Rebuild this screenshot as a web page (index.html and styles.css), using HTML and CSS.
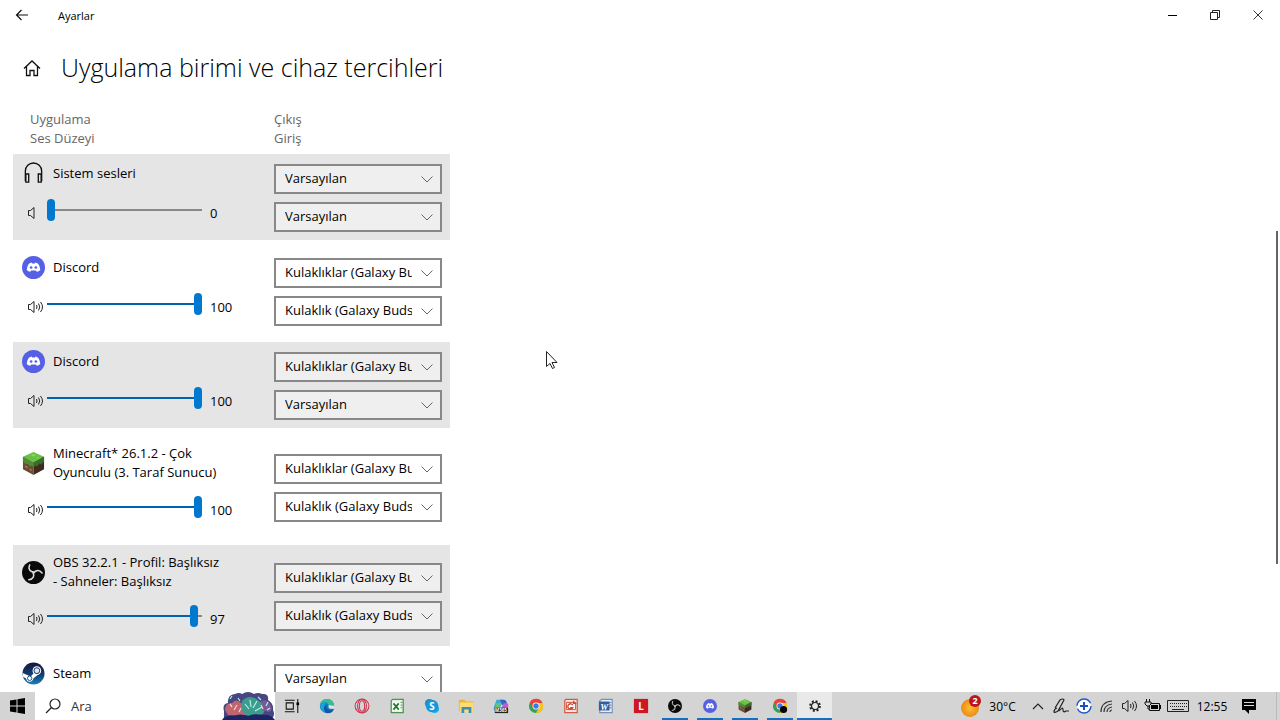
FILE: index.html
```html
<!DOCTYPE html>
<html lang="tr">
<head>
    <meta charset="UTF-8">
    <meta name="viewport" content="width=device-width, initial-scale=1.0">
    <title>Ayarlar</title>
    <link rel="stylesheet" href="styles.css">
</head>
<body>
    <svg class="sprite" aria-hidden="true">
        <symbol id="down" viewBox="0 0 12 12"><path d="M.5 3.5 6 9l5.500-5.500" fill="none" stroke="#666"/></symbol>
        <symbol id="mute" viewBox="0 0 18 16"><path d="M1.500 5.500h2L7 2.500v11L3.500 10.500h-2z" fill="none" stroke="#222"/></symbol>
        <symbol id="sound" viewBox="0 0 18 16"><path d="M1.500 5.500h2L7 2.500v11L3.500 10.500h-2zM9.500 6q1 2 0 4M11.500 4.500q2.500 3.500 0 7M13.500 3q4 5 0 10" fill="none" stroke="#222"/></symbol>
        <symbol id="discord" viewBox="0 0 24 24"><circle cx="12" cy="12" r="12" fill="#5560e4"/><path d="M8.500 7.200 10 6.800l.5.900h3l.5-.9 1.500.4q2.800 1.200 3.600 7.300-1.600 1.700-3.700 2l-.9-1.400H9.500l-.9 1.400q-2.100-.3-3.700-2 .8-6.100 3.600-7.300z" fill="#fff"/><circle cx="9.500" cy="12" r="1.400" fill="#5560e4"/><circle cx="14.500" cy="12" r="1.400" fill="#5560e4"/></symbol>
        <symbol id="block" viewBox="0 0 24 24"><path d="M12 0 23 5 12 11 1 5z" fill="#69c043"/><path d="M1 5l11 6v13L1 18z" fill="#6b4a35"/><path d="M23 5l-11 6v13l11-6z" fill="#402a20"/><path d="M1 5l11 6v5l-2-2-2 1-2-3-2 1-3-3z" fill="#4f8d32"/><path d="M23 5l-11 6v5l2-2 2 1 2-3 2 1 3-3z" fill="#386f28"/><path d="M3 14l3 1v2l-3-1zM8 17l2 1v2l-2-1z" fill="#a17857"/><path d="M12 2l3 1-3 2-3-2zM16 5l2 1-3 1z" fill="#83da58"/></symbol>
        <symbol id="obs" viewBox="0 0 24 24">
            <circle cx="12" cy="12" r="12" fill="#090909"/>
            <g fill="none" stroke="#ddd" stroke-width="1.600" stroke-linecap="round">
                <path d="M12.500 11.500C8.500 11.500 6 8.500 8 4"/>
                <path d="M12.500 11.500C8.500 11.500 6 8.500 8 4" transform="rotate(120 12 12)"/>
                <path d="M12.500 11.500C8.500 11.500 6 8.500 8 4" transform="rotate(240 12 12)"/>
            </g>
        </symbol>
        <symbol id="steam" viewBox="0 0 24 24"><defs><linearGradient id="steamBlue" x1="0" y1="0" x2="0" y2="1"><stop offset="0" stop-color="#14183d"/><stop offset=".55" stop-color="#143d70"/><stop offset="1" stop-color="#1683bb"/></linearGradient></defs><circle cx="12" cy="12" r="11.500" fill="url(#steamBlue)"/><path d="M.6 11.500 9 15l5-5 3 3-5 4q-1 4-4.500 3.500-3-.5-3.500-3.500L.8 15.500z" fill="#fff"/><circle cx="15.500" cy="9" r="4.500" fill="#fff"/><circle cx="15.500" cy="9" r="3" fill="#183a68" stroke="#183a68"/><circle cx="15.500" cy="9" r="2.500" fill="#dce9f4"/><circle cx="8" cy="17" r="2.300" fill="none" stroke="#17558a"/></symbol>
        <symbol id="headphones" viewBox="0 0 24 24"><path d="M3.500 20V9.500a8.500 8.500 0 0 1 17 0V20M4 12.500h3V21H4zM17 12.500h3V21h-3z" fill="none" stroke="#111" stroke-width="1.400"/></symbol>
        <symbol id="chrome" viewBox="0 0 18 18"><circle cx="9" cy="9" r="8" fill="#32a554"/><path d="M2 5a8 8 0 0 1 14.200.5H9L5.600 11z" fill="#e94335"/><path d="M9 5.500h7.200A8 8 0 0 1 8.800 17l3.500-6z" fill="#fbc21b"/><circle cx="9" cy="9" r="3.900" fill="#fff"/><circle cx="9" cy="9" r="3" fill="#3979e8"/></symbol>
    </svg>

    <header class="titlebar">
        <button class="back" aria-label="Geri"><svg width="14" height="12" viewBox="0 0 14 12"><path d="M6.500 1 1.500 6l5 5M1.500 6H13" fill="none" stroke="#111" stroke-width="1.200"/></svg></button>
        <span class="window-name">Ayarlar</span>
        <button class="window-button" aria-label="Simge durumuna küçült"><svg width="12" height="12"><path d="M1 6.500h9" stroke="#000"/></svg></button>
        <button class="window-button" aria-label="Önceki boyut"><svg width="12" height="12"><path d="M.5 3.500h7v7h-7zM2.500 3.500v-2h7v7h-2" fill="none" stroke="#222"/></svg></button>
        <button class="window-button" aria-label="Kapat"><svg width="12" height="12"><path d="m.5 1.500 9 9m0-9-9 9" stroke="#333"/></svg></button>
    </header>

    <main class="content">
        <div class="heading">
            <a href="#" class="home" aria-label="Giriş sayfası"><svg width="18" height="18"><path d="M1 9.500 9 2l8 7.500M3.500 7.500v9h3.500v-5h4v5h3.500v-9" fill="none" stroke="#111" stroke-width="1.300"/></svg></a>
            <h1>Uygulama birimi ve cihaz tercihleri</h1>
        </div>
        <div class="mixer">
            <div class="labels">
                <p>Uygulama<br>Ses Düzeyi</p>
                <p>Çıkış<br>Giriş</p>
            </div>

            <section class="app">
                <div class="source">
                    <div class="name"><svg class="logo"><use href="#headphones"/></svg><h2>Sistem sesleri</h2></div>
                    <div class="volume">
                        <svg class="speaker"><use href="#mute"/></svg>
                        <input type="range" aria-label="Sistem sesleri ses düzeyi" value="0" style="--level: 0%">
                        <output>0</output>
                    </div>
                </div>
                <div class="devices">
                    <div class="device"><select aria-label="Sistem sesleri çıkış"><option>Varsayılan</option></select><svg><use href="#down"/></svg></div>
                    <div class="device"><select aria-label="Sistem sesleri giriş"><option>Varsayılan</option></select><svg><use href="#down"/></svg></div>
                </div>
            </section>

            <section class="app">
                <div class="source">
                    <div class="name"><svg class="logo"><use href="#discord"/></svg><h2>Discord</h2></div>
                    <div class="volume">
                        <svg class="speaker"><use href="#sound"/></svg>
                        <input type="range" aria-label="Discord ses düzeyi" value="100" style="--level: 100%">
                        <output>100</output>
                    </div>
                </div>
                <div class="devices">
                    <div class="device"><select aria-label="Discord çıkış"><option>Kulaklıklar (Galaxy Buds)</option></select><svg><use href="#down"/></svg></div>
                    <div class="device"><select aria-label="Discord giriş"><option>Kulaklık (Galaxy Buds)</option></select><svg><use href="#down"/></svg></div>
                </div>
            </section>

            <section class="app">
                <div class="source">
                    <div class="name"><svg class="logo"><use href="#discord"/></svg><h2>Discord</h2></div>
                    <div class="volume">
                        <svg class="speaker"><use href="#sound"/></svg>
                        <input type="range" aria-label="Discord ses düzeyi" value="100" style="--level: 100%">
                        <output>100</output>
                    </div>
                </div>
                <div class="devices">
                    <div class="device"><select aria-label="Discord çıkış"><option>Kulaklıklar (Galaxy Buds)</option></select><svg><use href="#down"/></svg></div>
                    <div class="device"><select aria-label="Discord giriş"><option>Varsayılan</option></select><svg><use href="#down"/></svg></div>
                </div>
            </section>

            <section class="app">
                <div class="source">
                    <div class="name"><svg class="logo"><use href="#block"/></svg><h2>Minecraft* 26.1.2 - Çok Oyunculu (3. Taraf Sunucu)</h2></div>
                    <div class="volume">
                        <svg class="speaker"><use href="#sound"/></svg>
                        <input type="range" aria-label="Minecraft ses düzeyi" value="100" style="--level: 100%">
                        <output>100</output>
                    </div>
                </div>
                <div class="devices">
                    <div class="device"><select aria-label="Minecraft çıkış"><option>Kulaklıklar (Galaxy Buds)</option></select><svg><use href="#down"/></svg></div>
                    <div class="device"><select aria-label="Minecraft giriş"><option>Kulaklık (Galaxy Buds)</option></select><svg><use href="#down"/></svg></div>
                </div>
            </section>

            <section class="app">
                <div class="source">
                    <div class="name"><svg class="logo"><use href="#obs"/></svg><h2>OBS 32.2.1 - Profil: Başlıksız - Sahneler: Başlıksız</h2></div>
                    <div class="volume">
                        <svg class="speaker"><use href="#sound"/></svg>
                        <input type="range" aria-label="OBS ses düzeyi" value="97" style="--level: 97%">
                        <output>97</output>
                    </div>
                </div>
                <div class="devices">
                    <div class="device"><select aria-label="OBS çıkış"><option>Kulaklıklar (Galaxy Buds)</option></select><svg><use href="#down"/></svg></div>
                    <div class="device"><select aria-label="OBS giriş"><option>Kulaklık (Galaxy Buds)</option></select><svg><use href="#down"/></svg></div>
                </div>
            </section>

            <section class="app">
                <div class="source">
                    <div class="name"><svg class="logo"><use href="#steam"/></svg><h2>Steam</h2></div>
                    <div class="volume">
                        <svg class="speaker"><use href="#sound"/></svg>
                        <input type="range" aria-label="Steam ses düzeyi" value="100" style="--level: 100%">
                        <output>100</output>
                    </div>
                </div>
                <div class="devices">
                    <div class="device"><select aria-label="Steam çıkış"><option>Varsayılan</option></select><svg><use href="#down"/></svg></div>
                    <div class="device"><select aria-label="Steam giriş"><option>Varsayılan</option></select><svg><use href="#down"/></svg></div>
                </div>
            </section>
        </div>
        <div class="scrollbar"></div>
    </main>

    <footer class="taskbar">
        <button class="start" aria-label="Başlat"><svg width="16" height="16"><path d="M0 2.500 6.500 1.500v6H0zM7.500 1.300 15 0v7.500H7.500zM0 8.500h6.500v6L0 13.500zM7.500 8.500H15V16l-7.500-1.200z" fill="#000"/></svg></button>
        <div class="search">
            <svg width="16" height="16"><circle cx="10" cy="6" r="5" fill="none" stroke="#222" stroke-width="1.200"/><path d="M6.500 9.500 1 15" stroke="#222" stroke-width="1.300"/></svg>
            <input type="text" placeholder="Ara" aria-label="Ara">
            <svg class="coral" width="53" height="28" viewBox="0 0 53 28">
                <path d="M2 19q-2-7 4-8-1-8 7-9 4-2 7 0 6-4 12 0 4-2 8 0 7-1 6 6 6 4 5 10 3 6-2 9H2z" fill="#454781"/>
                <path d="M3 18q0-7 7-7 4-5 9 0 5 3 7 12H6z" fill="#bd6571"/>
                <path d="M20 9q8-8 17 0 9 5 4 13l-15 2Q17 20 20 9z" fill="#3d9c90"/>
                <path d="M39 9q7-3 10 5 2 4-2 6l-7-2z" fill="#775a9c"/>
                <path d="M0 28q3-5 12-4 6-3 14 0 5-3 13-1 10-1 14 5z" fill="#1b2464"/>
                <path d="m27 17-4-5m6 3-1-7m3 8 4-7m-2 10 7-4M16 6l2 3M8 7l2-3m26 1 3 3m5 6 2-4m-1 8 3-2" fill="none" stroke="#b5f0df" stroke-width="1.200"/>
                <path d="m12 18 3-5m-5 2-2-3m9 8 2-4m22 1-2-4" fill="none" stroke="#ffc4bb" stroke-width="1.400"/>
            </svg>
        </div>
        <nav class="apps">
            <button aria-label="Görev görünümü"><svg viewBox="0 0 18 18"><path d="M2.500 5.500h8v7h-8zM1 2.500h11M1 15.500h11M15.500 1v16" fill="none" stroke="#111" stroke-width="1.200"/><path d="M14 5h3v3h-3z"/></svg></button>
            <button aria-label="Edge"><svg viewBox="0 0 18 18"><circle cx="9" cy="9" r="8" fill="#1675c9"/><path d="M1 8C2-1 16-1 17 8q0 4-4 4-4 0-2-3-1-5-6-4-3 1-4 3z" fill="#36bd91"/><path d="M1 8q4-5 8-2-4 1-3 5 1 4 7 4-10 5-12-7z" fill="#19a2d4"/><path d="M8 8q-1 4 4 6 3 0 5-2-2 6-9 5-5-5 0-9z" fill="#1556a4"/><path d="M11 8q-1 3 1 4h5V9z" fill="#d9e7ea"/></svg></button>
            <button aria-label="Opera"><svg viewBox="0 0 18 18"><g fill="none" stroke="#cf3551" stroke-width="1.200"><circle cx="9" cy="9" r="7.800"/><ellipse cx="9" cy="9" rx="3" ry="6"/><ellipse cx="9" cy="9" rx="5" ry="7.500"/></g></svg></button>
            <button aria-label="Excel"><svg viewBox="0 0 18 18"><path d="M4 1.500h12v15H2.500V3z" fill="#e5f2e4" stroke="#4d9450" stroke-width="1.400"/><path d="M4 5h9v9H4z" fill="#fff"/><path d="m5 6 6 7m0-7-6 7" stroke="#267535" stroke-width="2"/><path d="M13 5h2m-2 3h2m-2 3h2" stroke="#4d9450"/></svg></button>
            <button aria-label="Skype"><svg viewBox="0 0 18 18"><circle cx="6" cy="6" r="5" fill="#2488ce"/><circle cx="12" cy="12" r="5" fill="#1cabe3"/><circle cx="9" cy="9" r="7" fill="#1598d9"/><text x="9" y="13" text-anchor="middle" class="mark">S</text></svg></button>
            <button aria-label="Dosya Gezgini"><svg viewBox="0 0 18 18"><path d="M1 2h6l2 2h8v11H1z" fill="#e8b63b"/><path d="M2 5h15v11H2z" fill="#ffdb72"/><path d="M4 10h11v7h-3v-4H7v4H4z" fill="#388fbc"/></svg></button>
            <button aria-label="Copilot"><svg viewBox="0 0 18 18"><path d="M4 2h7l-4 12H2Q0 13 1 10z" fill="#3ba8da"/><path d="M8 2h4q3 0 4 5l-6 1z" fill="#3862bf"/><path d="M12 6h3q3 0 2 4l-2 4H8z" fill="#c35dc9"/><path d="m4 6 5-1-2 7H2z" fill="#61c777"/><path d="M2 11h15v6H2z" fill="#222"/><text x="9" y="16" text-anchor="middle" class="tiny">M365</text></svg></button>
            <button aria-label="Chrome"><svg><use href="#chrome"/></svg></button>
            <button aria-label="PowerPoint"><svg viewBox="0 0 18 18"><path d="M3 1.500h13v15H2V3z" fill="#f7e4df" stroke="#d45a43" stroke-width="1.400"/><path d="M4 5h10v8H4z" fill="#fff" stroke="#ce4632"/><path d="M11 8a3 3 0 1 0 0 3H8M12 3v3h3" fill="none" stroke="#ce4632" stroke-width="1.500"/></svg></button>
            <button aria-label="Word"><svg viewBox="0 0 18 18"><path d="M4 1.500h12v15H2V3z" fill="#e7edf8" stroke="#7a90b8" stroke-width="1.300"/><path d="M1 4h12v10H1z" fill="#335e9e"/><text x="7" y="13" text-anchor="middle" class="word">W</text><path d="M13 5h2m-2 3h2m-2 3h2" stroke="#456ba6"/></svg></button>
            <button aria-label="L"><svg viewBox="0 0 18 18"><path d="M1 1h16v16H1z" fill="#cd1722"/><text x="9" y="13" text-anchor="middle" class="mark">L</text></svg></button>
            <button class="running" aria-label="OBS"><svg class="small"><use href="#obs"/></svg></button>
            <button class="running" aria-label="Discord"><svg class="small"><use href="#discord"/></svg></button>
            <button class="running" aria-label="Minecraft"><svg class="small"><use href="#block"/></svg></button>
            <button class="running" aria-label="Chrome penceresi"><svg viewBox="0 0 18 18"><use href="#chrome" width="18" height="18"/><circle cx="13" cy="13" r="4" fill="#050505"/></svg></button>
            <button class="running active" aria-label="Ayarlar"><svg class="small" viewBox="0 0 18 18"><circle cx="9" cy="9" r="6" fill="none" stroke="#222" stroke-width="3" stroke-dasharray="2.500 2.212"/><circle cx="9" cy="9" r="4.500" fill="#e9e9e9" stroke="#222" stroke-width="1.500"/></svg></button>
        </nav>
        <div class="tray">
            <button class="weather">
                <svg width="22" height="22"><defs><radialGradient id="sun"><stop stop-color="#ffbc32"/><stop offset="1" stop-color="#ed8b14"/></radialGradient></defs><circle cx="10" cy="13" r="9" fill="url(#sun)"/><circle cx="15" cy="6" r="6" fill="#b91720"/><text x="15" y="9" text-anchor="middle" class="count">2</text></svg>
                30°C
            </button>
            <button aria-label="Gizli simgeler"><svg width="12" height="8"><path d="m1 7 5-5 5 5" fill="none" stroke="#222" stroke-width="1.200"/></svg></button>
            <button aria-label="Kalem"><svg width="16" height="16"><path d="M2 10 7 2q3-2 4 0L5 13q-3 2-4 1 0-3 3-4M6 13q4-5 4-1 0 3 3 1h3" fill="none" stroke="#222" stroke-width="1.200"/></svg></button>
            <button aria-label="Güncelleme"><svg width="16" height="16"><circle cx="8" cy="8" r="7" fill="#fff" stroke="#1d57cc" stroke-width="1.400" stroke-dasharray="19 3"/><path d="M8 4v8M4 8h8" stroke="#1d4ebd" stroke-width="2"/></svg></button>
            <button aria-label="Ağ"><svg width="16" height="16"><g fill="none" stroke="#333" stroke-width="1.200"><path d="M2 14Q2 4 13 3M5 14q0-7 8-8M8 14q0-4 5-5"/><path d="M11 14q0-2 2-2"/></g></svg></button>
            <button aria-label="Ses"><svg width="18" height="16"><use href="#sound"/></svg></button>
            <button aria-label="Pil"><svg width="18" height="16"><path d="M5.500 5.500h10v7h-10z" fill="none" stroke="#111"/><path d="M7 7h7v4H7zM16 7h1v4h-1z"/><path d="M2.500 1v3m3-3v3M1 4h6v2L5 8H3L1 6zM4 8v3h2" fill="#d4d4d4" stroke="#111"/></svg></button>
            <button class="keyboard" aria-label="Dokunmatik klavye"><svg width="22" height="12"><path d="M.5.500h21v11H.5z" fill="none" stroke="#222"/><path d="M3 3.500h17M3 6.500h17" stroke="#222" stroke-dasharray="1 1"/><path d="M5 9.500h12" stroke="#222"/></svg></button>
            <button class="clock">12:55</button>
            <button class="notices" aria-label="Bildirimler"><svg width="16" height="16"><path d="M1 1h14v11H8v4l-4-4H1z"/><path d="M3 4.500h10m-10 3h10" stroke="#ddd"/></svg></button>
        </div>
    </footer>
    <svg class="pointer" width="14" height="20" aria-hidden="true"><path d="M1.500 1.500v15l3.500-3 2.500 5 2-1-2.500-5h5z" fill="#fff" stroke="#222"/></svg>
</body>
</html>
```
FILE: styles.css
```css
*{
    box-sizing: border-box;
}
body{
    display: flex;
    flex-direction: column;
    height: 100vh;
    margin: 0;
    overflow: hidden;
    background-color: #fff;
    color: #000;
    font: 13px/19px "Open Sans", "Noto Sans", sans-serif;
}
button{
    display: flex;
    align-items: center;
    justify-content: center;
    padding: 0;
    border: 0;
    background: none;
    color: inherit;
    font: inherit;
}
h1, h2, p{
    margin: 0;
    font-weight: 400;
}
.sprite{
    position: absolute;
    width: 0;
    height: 0;
}

/* window */
.titlebar{
    display: flex;
    flex: none;
    height: 30px;
    font-size: 11px;
}
.back{
    width: 44px;
}
.window-name{
    flex: 1;
    padding-left: 14px;
    line-height: 31px;
}
.window-button{
    width: 43px;
}
.content{
    position: relative;
    flex: 1;
    min-height: 0;
    overflow: hidden;
    padding: 18px 13px 0;
}
.heading{
    display: flex;
    align-items: center;
    gap: 20px;
    height: 40px;
    padding-left: 10px;
}
.home{
    display: flex;
}
h1{
    font-size: 25px;
    font-weight: 300;
    line-height: 38px;
    padding-bottom: 2px;
}
.scrollbar{
    position: absolute;
    top: 201px;
    right: 2px;
    width: 2px;
    height: 333px;
    background-color: #666;
}

/* volume mixer */
.mixer{
    max-width: 437px;
}
.labels, .app{
    display: grid;
    grid-template-columns: 1fr 168px;
    padding: 0 8px;
}
.labels{
    padding: 22px 8px 6px;
    color: #666;
}
.labels p:first-child{
    padding-left: 9px;
}
.app{
    margin-bottom: 8px;
}
.app:nth-child(even){
    background-color: #e5e5e5;
}
.source{
    padding: 8px 0 13px 1px;
}
.name{
    display: flex;
    align-items: center;
    gap: 8px;
    min-height: 23px;
    max-width: 202px;
}
.logo{
    flex: none;
    width: 23px;
    height: 23px;
}
h2{
    font-size: 13px;
}
.volume{
    display: flex;
    align-items: center;
    height: 34px;
    margin-top: 8px;
    padding-left: 5px;
}
.speaker{
    flex: none;
    width: 18px;
    height: 16px;
    margin-top: 6px;
}
.volume input{
    width: 155px;
    height: 24px;
    margin: 0 8px 0 2px;
    appearance: none;
    background: linear-gradient(#0063b1, #0063b1) 0 50% / var(--level) 2px no-repeat, linear-gradient(#888, #888) 0 50% / 100% 2px no-repeat;
}
.volume input::-webkit-slider-thumb{
    width: 8px;
    height: 22px;
    appearance: none;
    border-radius: 4px;
    background-color: #0078d0;
}
output{
    margin-top: 6px;
}
.devices{
    display: flex;
    flex-direction: column;
    justify-content: center;
    gap: 8px;
    padding: 10px 0 8px;
}
.device{
    display: grid;
    align-items: center;
}
.device > *{
    grid-area: 1 / 1;
}
.device select{
    width: 100%;
    height: 30px;
    padding: 0 28px 1px 9px;
    appearance: none;
    border: 2px solid #888;
    border-radius: 0;
    background-color: rgba(255, 255, 255, 0.4);
    color: #000;
    font: inherit;
}
.device svg{
    justify-self: end;
    width: 12px;
    height: 12px;
    margin-right: 9px;
    pointer-events: none;
}

/* taskbar */
.taskbar{
    display: flex;
    flex: none;
    height: 28px;
    background-color: #d4d4d4;
}
.start{
    width: 35px;
}
.search{
    display: flex;
    align-items: center;
    width: 240px;
    padding-left: 10px;
    background-color: #fff;
}
.search input{
    width: 150px;
    height: 24px;
    padding: 0 10px;
    border: 0;
    background: none;
    font: inherit;
}
.search input::placeholder{
    color: #333;
}
.coral{
    margin-left: auto;
}
.apps{
    display: grid;
    grid-template-columns: repeat(16, 1fr);
    width: 557px;
}
.apps svg{
    width: 16px;
    height: 16px;
}
.apps .small{
    width: 14px;
    height: 14px;
}
.running{
    background: linear-gradient(#1170c0, #1170c0) 50% 100% / 26px 2px no-repeat;
}
.active{
    background-color: #e9e9e9;
    background-size: 100% 2px;
}
.mark{
    fill: #fff;
    font: bold 11px "Open Sans", sans-serif;
}
.word{
    fill: #fff;
    font: italic bold 10px "Liberation Serif", serif;
}
.tiny{
    fill: #fff;
    font: bold 5px "Open Sans", sans-serif;
}
.count{
    fill: #fff;
    font: bold 9px "Open Sans", sans-serif;
}
.tray{
    display: flex;
    margin-left: auto;
    padding-right: 10px;
    border-right: 1px solid #bbb;
    margin-right: 3px;
}
.tray button{
    width: 23px;
}
.tray .weather{
    gap: 7px;
    width: 68px;
    margin-right: 4px;
    font-size: 12px;
    white-space: nowrap;
}
.tray .keyboard{
    width: 28px;
}
.tray .clock{
    width: 40px;
    font-size: 12px;
}
.tray .notices{
    width: 34px;
}
.pointer{
    position: absolute;
    top: 350px;
    left: 545px;
}
```
